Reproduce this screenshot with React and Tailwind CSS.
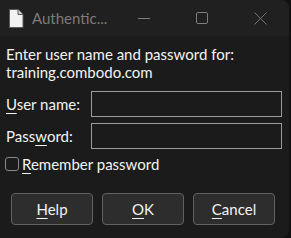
import React from 'react';

function FileIcon() {
  return (
    <svg width="16" height="19" viewBox="0 0 16 19" className="shrink-0">
      <path d="M1.5 0.5 H10 L15 5.5 V18.5 H1.5 Z" fill="#f2f2f2" stroke="#5a5a5a" strokeWidth="1" />
      <path d="M10 0.5 V5.5 H15" fill="#cfcfcf" stroke="#5a5a5a" strokeWidth="1" />
    </svg>
  );
}

function CaptionButtons() {
  return (
    <div className="flex items-center h-full">
      {/* minimize */}
      <div className="w-[58px] flex justify-center">
        <svg width="12" height="12" viewBox="0 0 12 12">
          <line x1="0" y1="6.5" x2="12" y2="6.5" stroke="#7d7d7d" strokeWidth="1" />
        </svg>
      </div>
      {/* maximize */}
      <div className="w-[58px] flex justify-center">
        <svg width="12" height="12" viewBox="0 0 12 12">
          <rect x="0.5" y="0.5" width="11" height="11" rx="1.5" fill="none" stroke="#7d7d7d" strokeWidth="1" />
        </svg>
      </div>
      {/* close */}
      <div className="w-[58px] flex justify-center">
        <svg width="13" height="13" viewBox="0 0 13 13">
          <path d="M0.5 0.5 L12.5 12.5 M12.5 0.5 L0.5 12.5" stroke="#7d7d7d" strokeWidth="0.9" />
        </svg>
      </div>
    </div>
  );
}

function Field({ mnemonicBefore, mnemonic, mnemonicAfter }) {
  return (
    <div className="flex items-center h-[26px]">
      <span className="w-[85px]">
        {mnemonicBefore}<u className="underline-offset-[3px]">{mnemonic}</u>{mnemonicAfter}
      </span>
      <div className="w-[191px] h-[26px] border border-[#9b9b9b] bg-[#1b1b1b]" />
    </div>
  );
}

export default function App() {
  return (
    <div className="w-[291px] h-[238px] bg-[#111111] overflow-hidden" style={{ fontFamily: 'Lato, "Noto Sans", sans-serif' }}>
      <div className="w-[289px] h-[238px] bg-[#1b1b1b] rounded-r-lg text-[15px] text-[#f3f3f3] leading-[18px] flex flex-col">
        {/* title bar */}
        <div className="h-[36px] bg-[#202020] rounded-tr-lg flex items-center pl-[8px]">
          <FileIcon />
          <span className="ml-[8px] text-[#7b7b7b] w-[88px]">Authentic...</span>
          <div className="ml-auto h-full">
            <CaptionButtons />
          </div>
        </div>

        {/* body */}
        <div className="flex flex-col pl-[6px] pt-[9px]">
          <p>Enter user name and password for:</p>
          <p>training.combodo.com</p>

          <div className="flex flex-col gap-[6px] mt-[10px]">
            <Field mnemonicBefore="" mnemonic="U" mnemonicAfter="ser name:" />
            <Field mnemonicBefore="Pass" mnemonic="w" mnemonicAfter="ord:" />
          </div>

          <label className="flex items-center mt-[6px] h-[18px]">
            <span className="w-[14px] h-[14px] border border-[#8a8a8a] rounded-[3px] bg-[#1b1b1b] ml-[-1px]" />
            <span className="ml-[3px]"><u className="underline-offset-[3px]">R</u>emember password</span>
          </label>

          <div className="flex gap-[9px] pl-[5px] mt-[20px]">
            {[
              ['', 'H', 'elp'],
              ['', 'O', 'K'],
              ['', 'C', 'ancel'],
            ].map(([a, m, b]) => (
              <button
                key={m}
                className="w-[82px] h-[32px] rounded-[4px] bg-[#2d2d2d] border border-[#626262] text-[#f3f3f3] text-[15px]"
              >
                {a}<u className="underline-offset-[3px]">{m}</u>{b}
              </button>
            ))}
          </div>
        </div>
      </div>
    </div>
  );
}
